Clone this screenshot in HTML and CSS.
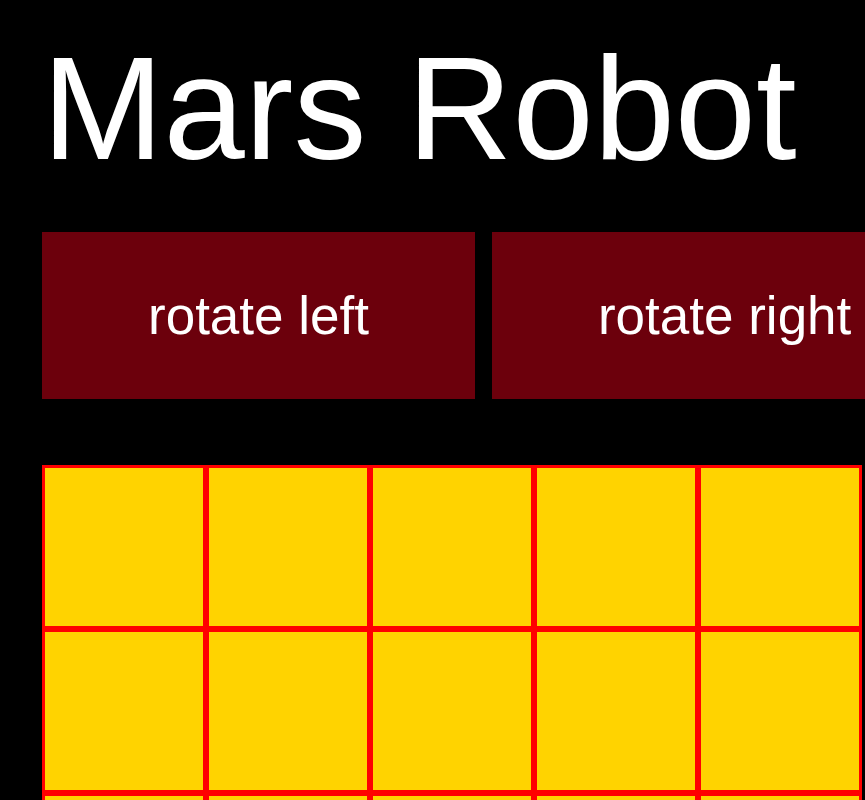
FILE: index.html
```html
<!DOCTYPE html>
<html lang="en">
<head>
<meta charset="utf-8">
<title>Mars Robot</title>
<link rel="stylesheet" href="styles.css">
</head>
<body>
<main class="app">
  <h1 class="title">Mars Robot</h1>
  <div class="controls">
    <button class="btn" type="button">rotate left</button>
    <button class="btn" type="button">rotate right</button>
  </div>
  <div class="grid">
    <div class="cell"></div><div class="cell"></div><div class="cell"></div><div class="cell"></div><div class="cell"></div>
    <div class="cell"></div><div class="cell"></div><div class="cell"></div><div class="cell"></div><div class="cell"></div>
    <div class="cell"></div><div class="cell"></div><div class="cell"></div><div class="cell"></div><div class="cell"></div>
    <div class="cell"></div><div class="cell"></div><div class="cell"></div><div class="cell"></div><div class="cell"></div>
    <div class="cell"></div><div class="cell"></div><div class="cell"></div><div class="cell"></div><div class="cell"></div>
  </div>
</main>
</body>
</html>
```

FILE: styles.css
```css
html, body {
  margin: 0;
  padding: 0;
  background: #000;
  overflow: hidden;
}

.app {
  padding-left: 42px;
  font-family: "Liberation Sans", Arial, sans-serif;
  color: #fff;
}

.title {
  margin: 36px 0 0;
  font-size: 146px;
  line-height: 1;
  font-weight: normal;
  white-space: nowrap;
}

.controls {
  display: flex;
  gap: 17px;
  margin-top: 50px;
  width: max-content;
}

.btn {
  display: flex;
  align-items: center;
  justify-content: center;
  height: 167px;
  padding: 0 106px;
  border: none;
  background: #6c000c;
  color: #fff;
  font-family: "Liberation Sans", Arial, sans-serif;
  font-size: 53px;
  white-space: nowrap;
}

.grid {
  display: grid;
  grid-template-columns: repeat(5, 164px);
  grid-auto-rows: 164px;
  margin-top: 66px;
  width: max-content;
}

.cell {
  box-sizing: border-box;
  border: 3px solid #ff0000;
  background: #ffd300;
}
```
